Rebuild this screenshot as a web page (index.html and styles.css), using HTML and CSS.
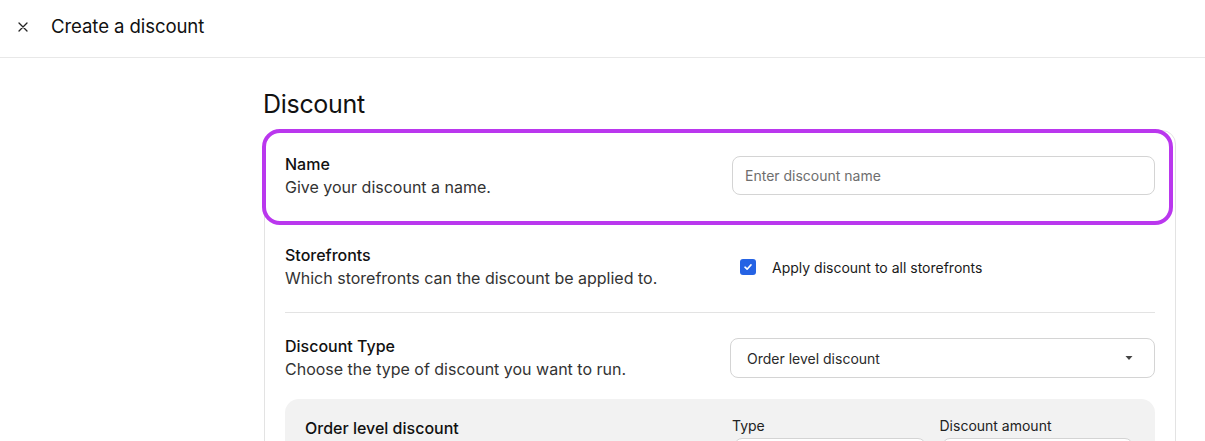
FILE: index.html
```html
<!DOCTYPE html>
<html lang="en">
<head>
<meta charset="utf-8">
<title>Create a discount</title>
<link rel="stylesheet" href="styles.css">
</head>
<body>
<header class="topbar">
  <button class="close" aria-label="Close">
    <svg width="10" height="10" viewBox="0 0 10 10"><path d="M1 1 L9 9 M9 1 L1 9" stroke="#222" stroke-width="1.3" stroke-linecap="round"/></svg>
  </button>
  <h1 class="topbar-title">Create a discount</h1>
</header>
<main class="main">
  <section class="content">
    <h2 class="page-heading">Discount</h2>
    <div class="card">
      <div class="highlight"></div>
      <div class="row">
        <div class="row-text">
          <div class="row-title">Name</div>
          <div class="row-desc">Give your discount a name.</div>
        </div>
        <div class="row-control">
          <div class="input"><span class="placeholder">Enter discount name</span></div>
        </div>
      </div>
      <div class="row">
        <div class="row-text">
          <div class="row-title">Storefronts</div>
          <div class="row-desc">Which storefronts can the discount be applied to.</div>
        </div>
        <div class="row-control">
          <label class="check">
            <span class="checkbox">
              <svg width="10" height="10" viewBox="0 0 10 10"><path d="M2 5.2 L4.1 7.2 L8 2.9" fill="none" stroke="#fff" stroke-width="1.6" stroke-linecap="round" stroke-linejoin="round"/></svg>
            </span>
            <span class="check-label">Apply discount to all storefronts</span>
          </label>
        </div>
      </div>
      <div class="row row-last">
        <div class="row-text">
          <div class="row-title">Discount Type</div>
          <div class="row-desc">Choose the type of discount you want to run.</div>
        </div>
        <div class="row-control">
          <div class="select">
            <span class="select-value">Order level discount</span>
            <svg class="caret" width="8" height="4" viewBox="0 0 8 4"><path d="M0.5 0 L7.5 0 L4 4 Z" fill="#444"/></svg>
          </div>
        </div>
      </div>
      <div class="subpanel">
        <div class="sub-title">Order level discount</div>
        <div class="sub-fields">
          <div class="field">
            <div class="field-label">Type</div>
            <div class="field-input"></div>
          </div>
          <div class="field">
            <div class="field-label">Discount amount</div>
            <div class="field-input"></div>
          </div>
        </div>
      </div>
    </div>
  </section>
</main>
</body>
</html>
```
FILE: styles.css
```css
* { box-sizing: border-box; }
html, body { margin: 0; padding: 0; background: #fff; }
body {
  font-family: Inter, "Noto Sans", "Liberation Sans", sans-serif;
  color: #111;
  overflow: hidden;
  height: 441px;
}
.topbar {
  height: 58px;
  border-bottom: 1px solid #e8e8e8;
  display: flex;
  align-items: center;
  padding: 0 0 6px 18px;
}
.close {
  width: 10px;
  height: 10px;
  padding: 0;
  border: 0;
  background: none;
  display: flex;
  margin-top: 2px;
}
.topbar-title {
  margin: 0 0 0 23px;
  font-size: 18.6px;
  font-weight: 400;
  color: #111;
  letter-spacing: -0.1px;
}
.main {
  padding: 0 29px 0 263px;
}
.content {
  display: flex;
  flex-direction: column;
}
.page-heading {
  margin: 30px 0 10px 0;
  font-size: 25px;
  line-height: 32px;
  font-weight: 400;
  color: #111;
  letter-spacing: -0.3px;
}
.card {
  position: relative;
  margin-left: 1px;
  border: 1px solid #e3e3e3;
  border-radius: 14px;
  padding: 0 20px;
  height: 400px;
}
.highlight {
  position: absolute;
  left: -3px;
  right: 2px;
  top: -2px;
  height: 96px;
  border: 4px solid #ba37ee;
  border-radius: 18px;
  pointer-events: none;
  z-index: 2;
}
.row {
  display: grid;
  grid-template-columns: 1fr 1fr;
  column-gap: 24px;
  align-items: center;
  padding: 22px 0;
  border-bottom: 1px solid #e3e3e3;
}
.row:first-of-type { padding-top: 21px; }
.row-last {
  border-bottom: 0;
  padding-bottom: 18px;
}
.row-title {
  font-size: 16px;
  line-height: 23px;
  font-weight: 500;
  color: #111;
}
.row-desc {
  font-size: 16px;
  line-height: 23px;
  color: #333;
}
.row-control {
  display: flex;
  align-items: center;
}
.input {
  width: 100%;
  height: 39px;
  margin-top: -2px;
  border: 1px solid #d4d4d4;
  border-radius: 8px;
  display: flex;
  align-items: center;
  padding: 0 12px;
}
.placeholder {
  font-size: 14px;
  color: #6e6e6e;
}
.check {
  display: flex;
  align-items: center;
  gap: 16px;
  padding-left: 8px;
}
.checkbox {
  width: 16px;
  height: 16px;
  border-radius: 3px;
  background: #2563e4;
  display: flex;
  align-items: center;
  justify-content: center;
}
.check-label {
  font-size: 14px;
  color: #1a1a1a;
}
.select {
  width: calc(100% + 2px);
  height: 40px;
  margin-left: -2px;
  border: 1px solid #d4d4d4;
  border-radius: 8px;
  display: flex;
  align-items: center;
  justify-content: space-between;
  padding: 0 21px 0 16px;
}
.select-value {
  font-size: 14px;
  color: #2a2a2a;
}
.caret { display: block; }
.subpanel {
  background: #f2f2f2;
  border-radius: 14px;
  padding: 18px 20px 0 20px;
  display: grid;
  grid-template-columns: 1fr 1fr;
  column-gap: 24px;
  height: 120px;
}
.sub-title {
  font-size: 16px;
  line-height: 23px;
  font-weight: 500;
  color: #111;
}
.sub-fields {
  display: grid;
  grid-template-columns: 1fr 1fr;
  column-gap: 14px;
  padding-right: 2px;
}
.field-label {
  font-size: 14px;
  line-height: 18px;
  color: #222;
  margin-bottom: 3px;
}
.field-input {
  height: 40px;
  margin-left: 2px;
  background: #fff;
  border: 1px solid #d4d4d4;
  border-radius: 8px;
}
```
